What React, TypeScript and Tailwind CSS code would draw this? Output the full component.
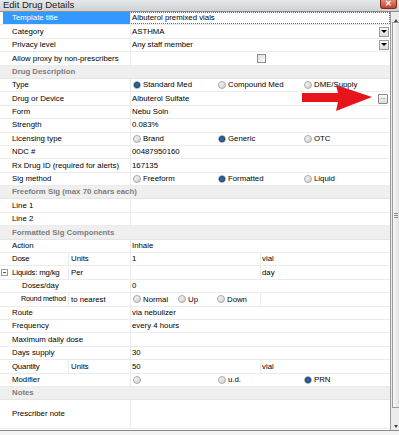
import React from 'react';

// Small widgets used by the property grid
function Radio({ checked = false }: { checked?: boolean }) {
  return (
    <span className="w-[8px] h-[8px] rounded-full border border-[#a8a8a8] bg-gradient-to-br from-[#f7f7f7] to-[#d2d2d2] flex items-center justify-center shrink-0">
      {checked && <span className="w-[4px] h-[4px] rounded-full bg-[#2866b4] ring-1 ring-[#15406f]" />}
    </span>
  );
}

function RadioLabel({ checked, text }: { checked?: boolean; text: string }) {
  return (
    <span className="flex items-center gap-[2px] whitespace-nowrap">
      <Radio checked={checked} />
      <span>{text}</span>
    </span>
  );
}

function RadioGroup({ items }: { items: { text: string; checked?: boolean }[] }) {
  return (
    <div className="grid grid-cols-[85px_86px_1fr] pl-[2px] items-center h-full">
      {items.map((it, i) => (
        <RadioLabel key={i} text={it.text} checked={it.checked} />
      ))}
    </div>
  );
}

function DropButton() {
  return (
    <span className="w-[10px] h-[10px] border border-[#9b9b9b] bg-gradient-to-b from-[#fafafa] to-[#dcdcdc] flex items-center justify-center shrink-0">
      <span className="w-0 h-0 border-l-[3px] border-r-[3px] border-t-[3px] border-l-transparent border-r-transparent border-t-black" />
    </span>
  );
}

type RowProps = {
  label?: React.ReactNode;
  sub?: string;
  value?: React.ReactNode;
  extra?: string;
  indent?: boolean;
  selected?: boolean;
  expander?: boolean;
  tall?: boolean;
  focused?: boolean;
  tight?: boolean;
};

function Row({ label, sub, value, extra, indent, selected, expander, tall, focused, tight }: RowProps) {
  return (
    <div className={`flex border-b border-[#ebebeb] ${tall ? 'h-[28.6px]' : 'h-[13.4px]'}`}>
      <div className="w-[131px] shrink-0 border-r border-[#ebebeb] flex relative">
        {expander && (
          <span className="absolute left-[1px] top-[3px] w-[7px] h-[7px] border border-[#9c9c9c] bg-white flex items-center justify-center">
            <span className="w-[3px] h-px bg-[#555]" />
          </span>
        )}
        {sub !== undefined ? (
          <>
            <div
              className={`w-[69px] shrink-0 border-r border-[#ebebeb] flex items-center ${
                tight ? 'text-[7.2px] tracking-[-0.2px]' : 'tracking-[-0.2px]'
              } ${indent ? 'pl-[21px]' : 'pl-[12px]'} whitespace-nowrap`}
            >
              {label}
            </div>
            <div className="flex-1 flex items-center pl-[2px] whitespace-nowrap">{sub}</div>
          </>
        ) : (
          <div
            className={`flex-1 flex items-center whitespace-nowrap ${
              selected ? 'ml-[3px] pl-[9px] bg-[#3399ff] text-white' : indent ? 'pl-[22px]' : 'pl-[12px]'
            }`}
          >
            {label}
          </div>
        )}
      </div>
      {extra !== undefined ? (
        <div className="flex-1 flex">
          <div className="w-[130px] shrink-0 border-r border-[#ebebeb] flex items-center pl-[1px] whitespace-nowrap">{value}</div>
          <div className="flex-1 flex items-center pl-[1px]">{extra}</div>
        </div>
      ) : (
        <div
          className={`flex-1 flex items-center whitespace-nowrap min-w-0 ${
            focused ? 'border border-dotted border-[#6b6b6b] -ml-px pl-[1px]' : 'pl-[1px]'
          }`}
        >
          {value}
        </div>
      )}
    </div>
  );
}

function Section({ title }: { title: string }) {
  return (
    <div className="h-[13.4px] flex items-center pl-[12px] bg-[#efefef] border-b border-[#e4e4e4] font-bold text-[#7d7d7d]">
      {title}
    </div>
  );
}

export default function App() {
  return (
    <div className="w-[399px] h-[435px] overflow-hidden bg-[#f4f4f4] font-['Liberation_Sans',Arial,sans-serif] text-[7.8px] text-black relative">
      {/* Title bar (top of the window is off-screen) */}
      <div className="h-[12px] overflow-hidden bg-gradient-to-b from-[#e6e8ea] to-[#cfd2d5] border-b border-[#8f8f8f] flex justify-between">
        <div className="pl-[3px] -mt-[2px] text-[9.5px] leading-[14px] text-[#222]">Edit Drug Details</div>
        <div className="mr-[2px] w-[17px] h-[9px] rounded-b-[3px] bg-gradient-to-b from-[#e08a78] to-[#c0432c] border border-t-0 border-[#7d2a1c] flex items-center justify-center text-white font-bold text-[8px] leading-none">
          ✕
        </div>
      </div>

      <div className="flex h-[418px]">
        {/* Property grid */}
        <div className="w-[391px] bg-white border-r border-[#9a9a9a] flex flex-col">
          <Row label="Template title" value="Albuterol premixed vials" selected focused />
          <Row
            label="Category"
            value={
              <div className="flex items-center justify-between w-full pr-[1px]">
                <span>ASTHMA</span>
                <DropButton />
              </div>
            }
          />
          <Row
            label="Privacy level"
            value={
              <div className="flex items-center justify-between w-full pr-[1px]">
                <span>Any staff member</span>
                <DropButton />
              </div>
            }
          />
          <Row
            label="Allow proxy by non-prescribers"
            value={
              <div className="flex justify-center w-full">
                <span className="w-[9px] h-[9px] border border-[#8e8e8e] bg-gradient-to-br from-[#dedede] to-[#fbfbfb]" />
              </div>
            }
          />
          <Section title="Drug Description" />
          <Row
            label="Type"
            value={
              <div className="w-full h-full -ml-px">
                <RadioGroup
                  items={[{ text: 'Standard Med', checked: true }, { text: 'Compound Med' }, { text: 'DME/Supply' }]}
                />
              </div>
            }
          />
          <Row
            label="Drug or Device"
            value={
              <div className="flex items-center justify-between w-full pr-[2px]">
                <span>Albuterol Sulfate</span>
                <span className="w-[10px] h-[10px] border border-[#8a8a8a] rounded-[1px] bg-gradient-to-b from-[#fafafa] to-[#dadada] flex items-center justify-center text-[6px] leading-none pb-[3px]">
                  ...
                </span>
              </div>
            }
          />
          <Row label="Form" value="Nebu Soln" />
          <Row label="Strength" value="0.083%" />
          <Row
            label="Licensing type"
            value={
              <div className="w-full h-full -ml-px">
                <RadioGroup items={[{ text: 'Brand' }, { text: 'Generic', checked: true }, { text: 'OTC' }]} />
              </div>
            }
          />
          <Row label="NDC #" value="00487950160" />
          <Row label="Rx Drug ID (required for alerts)" value="167135" />
          <Row
            label="Sig method"
            value={
              <div className="w-full h-full -ml-px">
                <RadioGroup items={[{ text: 'Freeform' }, { text: 'Formatted', checked: true }, { text: 'Liquid' }]} />
              </div>
            }
          />
          <Section title="Freeform Sig (max 70 chars each)" />
          <Row label="Line 1" />
          <Row label="Line 2" />
          <Section title="Formatted Sig Components" />
          <Row label="Action" value="Inhale" />
          <Row label="Dose" sub="Units" value="1" extra="vial" />
          <Row label="Liquids: mg/kg" sub="Per" value="" extra="day" expander />
          <Row label="Doses/day" value="0" indent />
          <Row
            label="Round method"
            sub="to nearest"
            indent
            tight
            value={
              <div className="flex items-center pl-[1px]">
                <span className="w-[45px]">
                  <RadioLabel text="Normal" />
                </span>
                <span className="w-[39px]">
                  <RadioLabel text="Up" />
                </span>
                <RadioLabel text="Down" />
              </div>
            }
            extra=""
          />
          <Row label="Route" value="via nebulizer" />
          <Row label="Frequency" value="every 4 hours" />
          <Row label="Maximum daily dose" />
          <Row label="Days supply" value="30" />
          <Row label="Quantity" sub="Units" value="50" extra="vial" />
          <Row
            label="Modifier"
            value={
              <div className="w-full h-full -ml-px">
                <RadioGroup items={[{ text: '' }, { text: 'u.d.' }, { text: 'PRN', checked: true }]} />
              </div>
            }
          />
          <Section title="Notes" />
          <Row label="Prescriber note" tall />
        </div>

        {/* Scrollbar */}
        <div className="flex-1 bg-[#ececec] flex flex-col items-stretch">
          <div className="h-[10px] flex items-end justify-end pr-[1px]">
            <span className="w-0 h-0 border-l-[2px] border-r-[2px] border-b-[3px] border-l-transparent border-r-transparent border-b-[#444]" />
          </div>
          <div className="h-[386px] ml-[1px] border border-r-0 border-[#9c9c9c] bg-gradient-to-r from-[#f6f6f6] to-[#e2e2e2] flex items-center justify-end">
            <span className="flex flex-col gap-px pr-[1px]">
              <span className="w-[4px] h-px bg-[#8a8a8a]" />
              <span className="w-[4px] h-px bg-[#8a8a8a]" />
              <span className="w-[4px] h-px bg-[#8a8a8a]" />
            </span>
          </div>
          <div className="flex-1 flex items-end justify-end pr-[1px] pb-[2px]">
            <span className="w-0 h-0 border-l-[2px] border-r-[2px] border-t-[3px] border-l-transparent border-r-transparent border-t-[#444]" />
          </div>
        </div>
      </div>
      <div className="border-t border-[#8a8a8a]" />

      {/* Red annotation arrow */}
      <svg className="absolute left-[300px] top-[84px]" width="76" height="28" viewBox="0 0 76 28">
        <polygon points="2,9 38,9 36,1 72,13 36,27 38,18 2,18" fill="#e8141c" />
      </svg>
    </div>
  );
}
